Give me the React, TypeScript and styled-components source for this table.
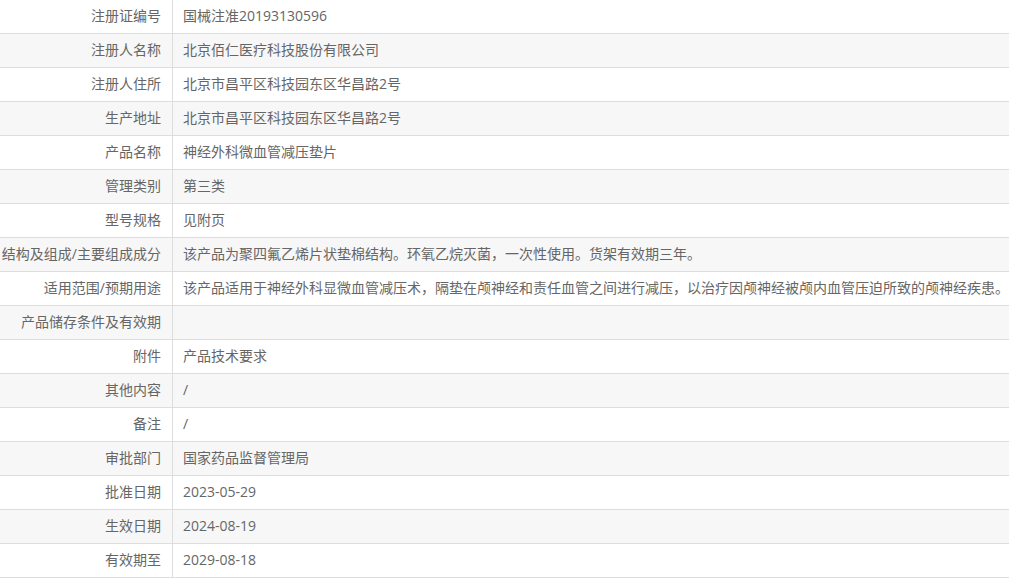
import React from "react";
import styled, { createGlobalStyle } from "styled-components";

const Global = createGlobalStyle`
  html, body { margin: 0; padding: 0; background: #fff; }
  body { font-family: "Open Sans", "Noto Sans CJK SC", "Microsoft YaHei", sans-serif; }
  * { box-sizing: border-box; }
`;

const Table = styled.div`
  width: 100%;
  display: flex;
  flex-direction: column;
  font-size: 14px;
  color: #666;
`;

const Row = styled.div<{ $shaded: boolean }>`
  display: grid;
  grid-template-columns: 173px 1fr;
  height: 34px;
  border-bottom: 1px solid #ddd;
  background: ${(p) => (p.$shaded ? "#f7f7f7" : "#fff")};
`;

const Label = styled.div`
  display: flex;
  align-items: center;
  justify-content: flex-end;
  padding: 0 11px 1px 0;
  border-right: 1px solid #ddd;
  white-space: nowrap;
  line-height: 20px;
`;

const Value = styled.div`
  display: flex;
  align-items: center;
  padding: 0 0 1px 10px;
  white-space: nowrap;
  line-height: 20px;
`;

const rows: [string, string][] = [
  ["注册证编号", "国械注准20193130596"],
  ["注册人名称", "北京佰仁医疗科技股份有限公司"],
  ["注册人住所", "北京市昌平区科技园东区华昌路2号"],
  ["生产地址", "北京市昌平区科技园东区华昌路2号"],
  ["产品名称", "神经外科微血管减压垫片"],
  ["管理类别", "第三类"],
  ["型号规格", "见附页"],
  ["结构及组成/主要组成成分", "该产品为聚四氟乙烯片状垫棉结构。环氧乙烷灭菌，一次性使用。货架有效期三年。"],
  ["适用范围/预期用途", "该产品适用于神经外科显微血管减压术，隔垫在颅神经和责任血管之间进行减压，以治疗因颅神经被颅内血管压迫所致的颅神经疾患。"],
  ["产品储存条件及有效期", ""],
  ["附件", "产品技术要求"],
  ["其他内容", "/"],
  ["备注", "/"],
  ["审批部门", "国家药品监督管理局"],
  ["批准日期", "2023-05-29"],
  ["生效日期", "2024-08-19"],
  ["有效期至", "2029-08-18"],
];

export default function App() {
  return (
    <>
      <Global />
      <Table lang="zh-CN">
        {rows.map(([k, v], i) => (
          <Row key={k} $shaded={i % 2 === 1}>
            <Label>{k}</Label>
            <Value>{v}</Value>
          </Row>
        ))}
      </Table>
    </>
  );
}
